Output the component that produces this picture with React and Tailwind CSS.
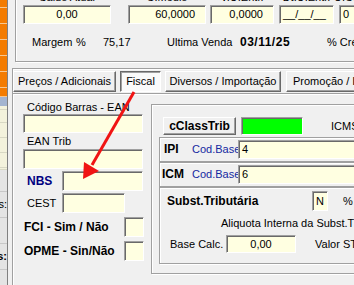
import React from "react";

const sunken =
  "border border-t-[#a0a0a0] border-l-[#a0a0a0] border-b-white border-r-white shadow-[inset_1px_1px_0_#696969] bg-[#ffffe1]";
const raised =
  "border border-t-white border-l-white border-b-[#696969] border-r-[#696969] shadow-[inset_-1px_-1px_0_#a0a0a0] bg-[#f0f0f0]";
const etched = "border border-[#a0a0a0] shadow-[inset_1px_1px_0_#fff,1px_1px_0_#fff]";

const Field = ({ className = "", children, align = "left" }) => (
  <div
    className={`${sunken} flex items-center px-[3px] overflow-hidden whitespace-nowrap ${
      align === "center" ? "justify-center" : align === "right" ? "justify-end" : "justify-start"
    } ${className}`}
  >
    {children}
  </div>
);

const LeftStrip = () => (
  <div className="w-[8px] shrink-0 flex flex-col border-r border-[#808080] overflow-hidden">
    <div className="flex flex-col bg-[#f47c00]">
      {[8, 16, 16, 16, 16, 16, 9].map((h, i) => (
        <div key={i} style={{ height: h }} className="border-b border-[#f8c890]" />
      ))}
    </div>
    <div className="h-[9px] bg-[#a3b4d0]" />
    <div className="flex flex-col bg-[#f3f2dc]">
      {[4, 13, 15, 15, 15, 2].map((h, i) => (
        <div key={i} style={{ height: h }} className="border-b border-[#d8d8c4]" />
      ))}
    </div>
    <div className="flex-1 flex flex-col bg-[#e4e4e4]">
      <div className="h-[22px] border-b border-[#c8c8c8]" />
      <div className="h-[26px] border-b border-[#c8c8c8] flex items-center justify-end text-[11px] leading-none">s:</div>
      <div className="h-[26px] border-b border-[#c8c8c8]" />
      <div className="h-[26px] border-b border-[#c8c8c8] flex items-center justify-end font-bold text-[11px] leading-none">s:</div>
    </div>
  </div>
);

const TopGroup = () => {
  const cols = [
    { label: "Saldo Atual", ml: "ml-[7px]", w: "w-[88px]", val: "0,00", align: "center" },
    { label: "C.Medio", ml: "ml-[17px]", w: "w-[78px]", val: "60,0000", align: "right" },
    { label: "V.U.Entr.", ml: "ml-[4px]", w: "w-[64px]", val: "0,0000", align: "right" },
    { label: "Dt.U.Entr.", ml: "ml-[5px]", w: "w-[55px]", val: "__/__/__", align: "left" },
    { label: "U.Compra", ml: "ml-[5px]", w: "w-[40px]", val: "0", align: "left" },
  ];
  return (
    <div className={`${etched} ml-[7px] -mt-[20px] h-[82px] w-[420px] shrink-0 flex flex-col`}>
      <div className="flex pt-[10px]">
        {cols.map((c) => (
          <div key={c.label} className={`${c.ml} ${c.w} flex flex-col items-center`}>
            <div className="h-[13px] mb-[1px] whitespace-nowrap">{c.label}</div>
            <Field className={`w-full h-[19px] ${c.align === "right" ? "pr-[10px]" : ""}`} align={c.align}>
              {c.val}
            </Field>
          </div>
        ))}
      </div>
      <div className="flex mt-[12px] h-[13px] whitespace-nowrap">
        <div className="ml-[16px] w-[44px]">Margem</div>
        <div className="w-[27px]">%</div>
        <div className="w-[64px]">75,17</div>
        <div className="w-[73px]">Ultima Venda</div>
        <div className="w-[87px] font-bold text-[12px] tracking-[0.5px]">03/11/25</div>
        <div>% Crédito</div>
      </div>
    </div>
  );
};

const Tabs = () => (
  <div className="flex h-[21px] mt-[2px] whitespace-nowrap">
    <div className={`${raised} w-[103px] shrink-0 flex items-center justify-center`}>Preços / Adicionais</div>
    <div className="ml-[4px] w-[41px] shrink-0 flex items-center justify-center border border-t-[#696969] border-l-[#696969] border-b-white border-r-white shadow-[inset_1px_1px_0_#a0a0a0] bg-[#fafafa]">
      Fiscal
    </div>
    <div className={`${raised} ml-[4px] w-[116px] shrink-0 flex items-center justify-center`}>Diversos / Importação</div>
    <div className={`${raised} ml-[5px] w-[110px] shrink-0 flex items-center justify-start pl-[6px]`}>Promoção / Internet</div>
  </div>
);

const LeftColumn = () => (
  <div className="ml-[10px] w-[121px] shrink-0 flex flex-col pt-[6px]">
    <div className="ml-[4px] h-[13px] whitespace-nowrap">Código Barras - EAN</div>
    <Field className="w-[120px] h-[19px]" />
    <div className="ml-[4px] mt-[2px] h-[13px]">EAN Trib</div>
    <Field className="w-[120px] h-[20px] mt-[1px]" />
    <div className="flex items-center mt-[2px] h-[20px]">
      <div className="w-[39px] pl-[4px] font-bold text-[12px] text-[#000080]">NBS</div>
      <Field className="w-[81px] h-[20px]" />
    </div>
    <div className="flex items-center mt-[2px] h-[20px]">
      <div className="w-[39px] pl-[4px]">CEST</div>
      <Field className="w-[63px] h-[20px]" />
    </div>
    <div className="flex items-center mt-[4px] h-[20px]">
      <div className="w-[101px] pl-[1px] font-bold text-[12px] whitespace-nowrap">FCI - Sim / Não</div>
      <Field className="w-[20px] h-[20px]" />
    </div>
    <div className="flex items-center mt-[4px] h-[20px]">
      <div className="w-[101px] pl-[1px] font-bold text-[12px] whitespace-nowrap">OPME - Sin/Não</div>
      <Field className="w-[20px] h-[20px]" />
    </div>
  </div>
);

const TaxRow = ({ label, value, pl }) => (
  <div className={`${etched} h-[25px] w-[300px] flex items-center`}>
    <div className={`w-[32px] ${pl} font-bold text-[12px]`}>{label}</div>
    <div className="w-[46px] text-[#1428a0]">Cod.Base</div>
    <Field className="w-[200px] h-[19px] px-[2px]">{value}</Field>
  </div>
);

const RightGroup = () => (
  <div className={`${etched} ml-[7px] mt-[9px] h-[170px] w-[260px] shrink-0 flex flex-col`}>
    <div className="flex items-center mt-[12px] h-[18px] whitespace-nowrap">
      <div className={`${raised} ml-[11px] w-[73px] h-[18px] flex items-center justify-center font-bold text-[12px]`}>
        cClassTrib
      </div>
      <div className="ml-[5px] w-[62px] h-[18px] border border-t-[#a0a0a0] border-l-[#a0a0a0] border-b-white border-r-white shadow-[inset_1px_1px_0_#696969] bg-[#00ff00]" />
      <div className="ml-[28px]">ICMS</div>
    </div>
    <div className="ml-[7px] mt-[2px] flex flex-col">
      <TaxRow label="IPI" value="4" pl="pl-[4px]" />
      <TaxRow label="ICM" value="6" pl="pl-[2px]" />
      <div className={`${etched} h-[77px] w-[300px] flex flex-col`}>
        <div className="flex items-center mt-[3px] h-[20px] whitespace-nowrap">
          <div className="w-[152px] pl-[7px] font-bold text-[12px]">Subst.Tributária</div>
          <Field className="w-[16px] h-[20px] px-[2px]">N</Field>
          <div className="ml-[15px]">% ICMS</div>
        </div>
        <div className="mt-[6px] h-[13px] pl-[61px] whitespace-nowrap">Aliquota Interna da Subst.Tributária</div>
        <div className="flex items-center mt-[5px] h-[18px] whitespace-nowrap">
          <div className="w-[66px] pl-[10px]">Base Calc.</div>
          <Field className="w-[70px] h-[18px]" align="center">
            0,00
          </Field>
          <div className="ml-[19px]">Valor ST</div>
        </div>
      </div>
    </div>
  </div>
);

const Arrow = () => (
  <svg className="absolute inset-0 pointer-events-none" width="354" height="285" viewBox="0 0 354 285">
    <line x1="134" y1="92" x2="92" y2="165" stroke="#f01414" strokeWidth="3" />
    <polygon points="83,179 84,162 99,171" fill="#f01414" />
  </svg>
);

export default function App() {
  return (
    <div className="relative flex w-[354px] h-[285px] overflow-hidden bg-[#f0f0f0] text-black text-[11px] leading-[13px] font-['Liberation_Sans',Arial,sans-serif]">
      <LeftStrip />
      <div className="flex-1 min-w-0 flex flex-col">
        <TopGroup />
        <div className="ml-[4px] mt-[6px] flex-1 flex flex-col border-t border-l border-[#a0a0a0] shadow-[inset_1px_1px_0_#fff]">
          <Tabs />
          <div className="mt-[1px] h-[2px] border-t border-[#a0a0a0] shadow-[inset_0_1px_0_#fff] w-[400px]" />
          <div className="flex">
            <LeftColumn />
            <RightGroup />
          </div>
        </div>
      </div>
      <Arrow />
    </div>
  );
}
